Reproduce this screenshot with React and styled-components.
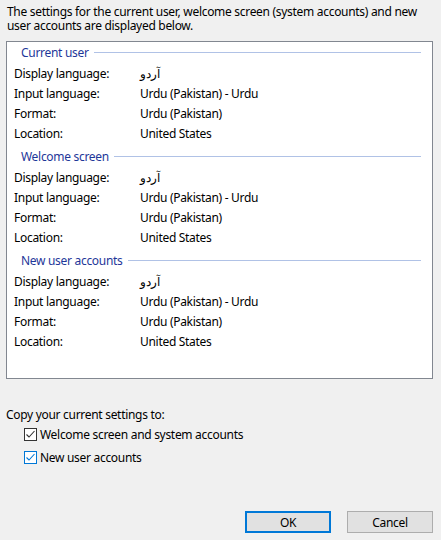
import styled, { createGlobalStyle } from "styled-components";

const GlobalStyle = createGlobalStyle`
  html, body {
    margin: 0;
    padding: 0;
    background: #f0f0f0;
  }
  body {
    font-family: "Noto Sans", "DejaVu Sans", sans-serif;
    font-size: 12px;
    letter-spacing: -0.3px;
    color: #000;
  }
`;

const Dialog = styled.div`
  width: 441px;
  height: 540px;
  box-sizing: border-box;
  display: flex;
  flex-direction: column;
  padding: 5px 8px 7px 6px;
`;

const Intro = styled.p`
  margin: 0 0 4px 1px;
  line-height: 14px;
  height: 32px;
`;

const Panel = styled.div`
  height: 338px;
  box-sizing: border-box;
  border: 1px solid #828790;
  background: #fff;
  padding: 0 11px 0 7px;
`;

const Section = styled.div`
  margin-bottom: 3px;
`;

const SectionHeader = styled.div`
  height: 21px;
  display: flex;
  align-items: center;
  gap: 5px;
  padding-left: 7px;
  color: #1e3799;

  &::after {
    content: "";
    flex: 1;
    height: 1px;
    background: #b0c2e6;
  }
`;

const Row = styled.div`
  height: 20px;
  display: grid;
  grid-template-columns: 126px 1fr;
  align-items: center;
`;

const Value = styled.span`
  font-size: 12px;
  font-weight: ${(p) => (p.$rtl ? 300 : 400)};
`;

const CopyLabel = styled.div`
  margin-top: 28px;
  height: 16px;
  line-height: 16px;
`;

const CheckRow = styled.label`
  height: 23px;
  display: flex;
  align-items: center;
  gap: 3px;
  padding-left: 18px;
`;

const Box = styled.span`
  width: 13px;
  height: 13px;
  box-sizing: border-box;
  border: 1px solid ${(p) => (p.$focus ? "#0078d7" : "#333")};
  background: #fff;
  display: flex;
  align-items: center;
  justify-content: center;
  color: ${(p) => (p.$focus ? "#0078d7" : "#333")};
`;

const Buttons = styled.div`
  margin-top: auto;
  display: flex;
  justify-content: flex-end;
  gap: 16px;
`;

const Button = styled.button`
  width: 86px;
  height: 22px;
  box-sizing: border-box;
  font-family: inherit;
  font-size: 12px;
  letter-spacing: -0.3px;
  color: #000;
  background: #e1e1e1;
  border: ${(p) => (p.$default ? "2px solid #0078d7" : "1px solid #adadad")};
  padding: 0;
`;

const Check = ({ focus }) => (
  <Box $focus={focus}>
    <svg width="11" height="11" viewBox="0 0 11 11">
      <path d="M1.5 5.5 L4 8 L9.5 2" fill="none" stroke="currentColor" strokeWidth="1.1" />
    </svg>
  </Box>
);

const sections = [
  "Current user",
  "Welcome screen",
  "New user accounts",
];

const rows = [
  ["Display language:", "آردو", true],
  ["Input language:", "Urdu (Pakistan) - Urdu"],
  ["Format:", "Urdu (Pakistan)"],
  ["Location:", "United States"],
];

export default function App() {
  return (
    <>
      <GlobalStyle />
      <Dialog>
        <Intro>
          The settings for the current user, welcome screen (system accounts) and new
          user accounts are displayed below.
        </Intro>
        <Panel>
          {sections.map((title) => (
            <Section key={title}>
              <SectionHeader>{title}</SectionHeader>
              {rows.map(([label, value, rtl]) => (
                <Row key={label}>
                  <span>{label}</span>
                  <Value $rtl={rtl}>{value}</Value>
                </Row>
              ))}
            </Section>
          ))}
        </Panel>
        <CopyLabel>Copy your current settings to:</CopyLabel>
        <CheckRow>
          <Check />
          Welcome screen and system accounts
        </CheckRow>
        <CheckRow>
          <Check focus />
          New user accounts
        </CheckRow>
        <Buttons>
          <Button $default>OK</Button>
          <Button>Cancel</Button>
        </Buttons>
      </Dialog>
    </>
  );
}
